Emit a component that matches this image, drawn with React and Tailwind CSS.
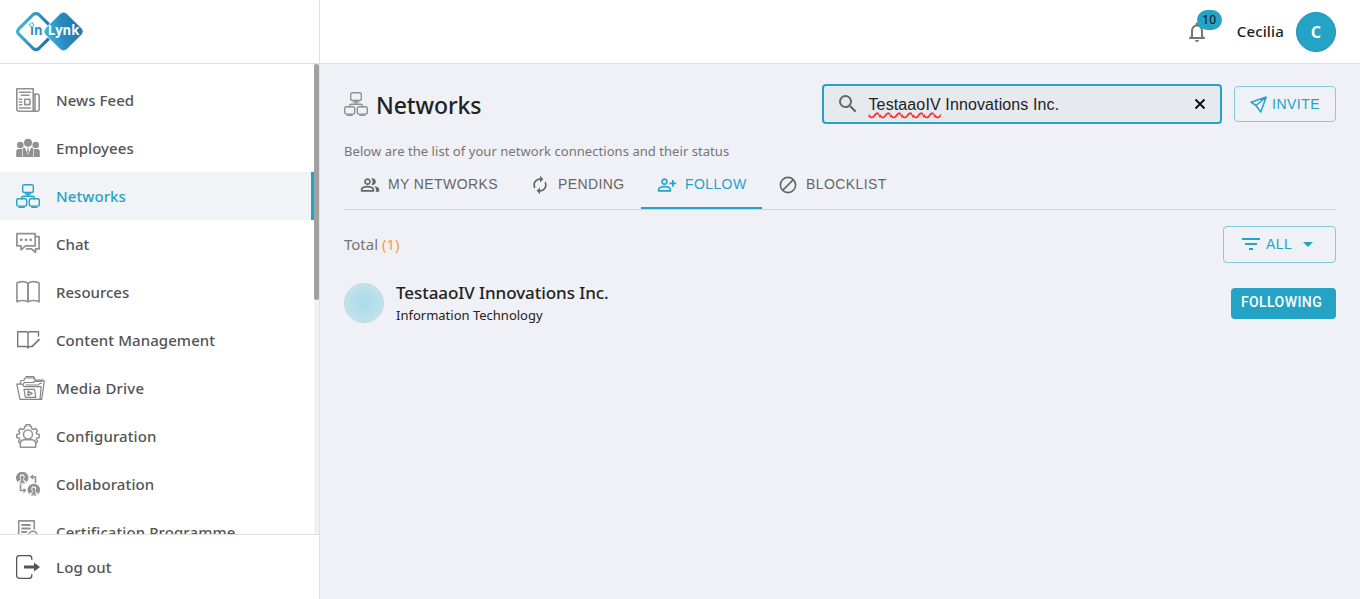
import React from "react";
import {
  MdOutlinePeopleAlt,
  MdAutorenew,
  MdOutlinePersonAddAlt,
  MdSearch,
  MdFilterList,
  MdArrowDropDown,
  MdNotificationsNone,
} from "react-icons/md";

function Icon({ children, className = "text-[#919191]", w = 24, h = 24, stroke = 1.4 }) {
  return (
    <svg
      className={"block shrink-0 " + className}
      width={w}
      height={h}
      viewBox={"0 0 " + w + " " + h}
      fill="none"
      stroke="currentColor"
      strokeWidth={stroke}
      strokeLinecap="round"
      strokeLinejoin="round"
    >
      {children}
    </svg>
  );
}

function NewsIcon() {
  return (
    <Icon stroke={1.6}>
      <path d="M3 0.8h14.2v22.4H3A2.2 2.2 0 0 1 .8 21V.8H3M17.2 6h3.8a2.2 2.2 0 0 1 2.2 2.2V21a2.2 2.2 0 0 1-2.2 2.2h-4a2.200 2.200 0 0 0 2-2.200V6" />
      <path d="M3.5 4.2h11M5.5 7.3h7.5M3.5 20h11M3.500 11.200h2.200M3.500 14h2.200M3.500 16.800h2.200" />
      <path d="M8.700 11.200h5.200v5.400H8.700z" />
    </Icon>
  );
}

function EmployeesIcon() {
  return (
    <Icon stroke={0}>
      <g fill="currentColor">
        <circle cx="12" cy="6.800" r="4" />
        <circle cx="4.300" cy="9" r="3.300" />
        <circle cx="19.700" cy="9" r="3.300" />
        <path d="M6.600 21v-7.200c0-1.400.8-2.300 2.200-2.300L12 19l3.200-7.500c1.400 0 2.200.9 2.200 2.300V21z" />
        <path d="M11.200 11.800h1.600l-.3 1.200.5 3-1 1.800-1-1.800.5-3z" />
        <path d="M.2 21v-5.400c0-1.400 1-2.500 2.300-2.500H6V21zM23.800 21v-5.400c0-1.400-1-2.500-2.300-2.500H18V21z" />
      </g>
    </Icon>
  );
}

function NetworkIcon({ className }) {
  return (
    <Icon className={className} stroke={1.4}>
      <rect x="6.700" y="0.700" width="10.600" height="7.800" rx="1.800" />
      <rect x="0.700" y="14.700" width="10" height="7.400" rx="1.800" />
      <rect x="13.300" y="14.700" width="10" height="7.400" rx="1.800" />
      <path d="M9.500 10h5M12 8.500v3.700M5.700 14.700v-1c0-.9.600-1.400 1.400-1.400h9.800c.8 0 1.400.5 1.400 1.400v1M3.200 23.300h5M15.800 23.300h5" />
    </Icon>
  );
}

function ChatIcon() {
  return (
    <Icon stroke={1.7}>
      <path d="M.9 1.700h18.300v12.200H9.500L5 17.800v-3.900H.9z" />
      <path d="M19.500 4.700h3.600v12.200h-3.600v3.400l-4-3.400h-4.800" />
      <g fill="currentColor" stroke="none">
        <circle cx="5.300" cy="7.800" r="1.400" />
        <circle cx="10" cy="7.800" r="1.400" />
        <circle cx="14.700" cy="7.800" r="1.400" />
      </g>
    </Icon>
  );
}

function BookIcon() {
  return (
    <Icon stroke={1.6}>
      <path d="M12 3.200C9 1.400 4.500 1.400.9 3v18.800c3.600-1.500 8.100-1.500 11.100 0 3-1.500 7.500-1.500 11.100 0V3C19.500 1.400 15 1.400 12 3.200zv18.600" />
      <path d="M12 3.200v18.400" strokeWidth="2" />
    </Icon>
  );
}

function ContentIcon() {
  return (
    <Icon className="text-[#777777]">
      <path d="M22.500 8V3.800h-9.200L12 5l-1.200-1.200H1.700v14.700h8.800L12 20l1.500-1.500h3M12 5v14.500" />
      <path d="M23 11.700l-6.500 6.500" strokeWidth="1.800" />
    </Icon>
  );
}

function MediaIcon() {
  return (
    <Icon w={29} stroke={1.2} className="text-[#848484]">
      <path d="M4 23.300L.8 8.200h5.500l1.800 2.500h17l-1 12q-.2.600-.8.600zM24.500 23.300h1.200L28.300 5.500c0-.8-.4-1.300-1.200-1.300H19l-1.500-2.200H9L7.800 4.500H5.200L4 7.800" />
      <path d="M7.500 8l.7-1.500h9l1.200-1.200h8M9.800.7h8l1.200 2M10 9h12.500l1.200-1.500h1.700" />
      <path d="M8 13.300h10.500l1.200 8H9.400z" />
      <path d="M12 15v4.400l4.300-1.900z" />
    </Icon>
  );
}

function ConfigIcon() {
  return (
    <Icon stroke={1.5}>
      <path d="M3.700 19.200l-1.200-1.800 1.300-2-.6-1.300-2.400-.5v-3l2.400-.6.6-1.400-1.300-2.100 2.100-2.200L6.700 5.600l1.500-.7L8.700 2.500l1.300-.2V.8h4v1.500l1.300.2.500 2.400 1.500.7 2.100-1.300 2.100 2.200-1.300 2.100.6 1.400 2.400.6v3l-2.400.5-.6 1.300 1.300 2-1.200 1.800" />
      <circle cx="12" cy="10.500" r="4.500" />
      <path d="M4.300 23.200v-3.500c0-2.500 1.800-4 4.500-4h6.400c2.700 0 4.500 1.500 4.500 4v3.500z" />
    </Icon>
  );
}

function Person({ x, y }) {
  return (
    <g transform={"translate(" + x + " " + y + ")"} stroke="none">
      <circle r="6.200" fill="currentColor" />
      <path d="M0-3.700c-1.900 0-2.600 1.400-2.400 3C-2.200.6-1.700 1.500-1.200 2c-2 .5-3 1-3.300 2.200L-4 5.500h8l.5-1.300C4.200 3 3.200 2.500 1.200 2c.5-.5 1-1.400 1.200-2.700.2-1.600-.5-3-2.400-3z" fill="#fff" />
      <path d="M0-2.500c-1.200 0-1.600 1-1.500 2C-1.400.7-.9 1.500-.7 2L-3 4.800h6L.7 2c.2-.5.700-1.300.8-2.500.1-1-.3-2-1.500-2z" fill="currentColor" />
    </g>
  );
}

function CollabIcon() {
  return (
    <Icon stroke={1.6}>
      <Person x={6.2} y={6} />
      <Person x={17.8} y={18} />
      <path d="M15 5h4.500v5.500M4.500 13v5.500H8" />
      <path d="M17.300 2.200v5.600L13.800 5zM7.500 15.700v5.600l3-2.800z" fill="currentColor" stroke="none" />
    </Icon>
  );
}

function CertIcon() {
  return (
    <Icon stroke={1.6}>
      <path d="M9 23H2.700V.9h15.600V9" />
      <path d="M6 5h8M6 8.500h8M6 12h4.500" strokeWidth="1.800" />
      <circle cx="17" cy="15.500" r="4.300" />
      <path d="M15.500 15.500l1.200 1.200 2-2.200" />
    </Icon>
  );
}

function LogoutIcon() {
  return (
    <Icon className="text-[#555555]" stroke={1.3}>
      <path d="M15.800 4.300V3.500c0-1.700-1.200-2.900-2.900-2.900H3.500C1.800.6.600 1.800.6 3.500v17c0 1.700 1.200 2.900 2.900 2.900h9.400c1.700 0 2.900-1.200 2.900-2.900v-.8" />
      <path d="M8 10.400h10V7.500l6 4.500-6 4.500v-2.900H8z" fill="currentColor" stroke="none" />
    </Icon>
  );
}

function Logo() {
  return (
    <svg className="block" width="68" height="40" viewBox="0 0 68 40">
      <defs>
        <linearGradient id="ring" x1="0" y1="0" x2="1" y2="0.300">
          <stop offset="0" stopColor="#45bfe0" />
          <stop offset="1" stopColor="#1d6fac" />
        </linearGradient>
        <linearGradient id="solid" x1="0" y1="0.500" x2="1" y2="0.300">
          <stop offset="0" stopColor="#3db8dc" />
          <stop offset="0.500" stopColor="#2788bd" />
          <stop offset="1" stopColor="#2b6fa8" />
        </linearGradient>
      </defs>
      <path d="M17.300 2.400q2.700-1.800 5.400 0L37 16.500q2.800 3 0 6L22.700 36.600q-2.700 1.800-5.400 0L3 22.500q-2.800-3 0-6z" fill="none" stroke="url(#ring)" strokeWidth="3.200" />
      <path d="M44.500 1.200q3-2.200 6 0L66 16.500q2.400 3 0 6L50.500 37.800q-3 2.200-6 0L29 22.500q-2.400-3 0-6z" fill="url(#solid)" stroke="#fff" strokeWidth="0.800" />
      <text x="14" y="23.300" fill="#2d8fc4" fontSize="14" fontWeight="700" fontFamily="Open Sans, sans-serif" textLength="12.500" lengthAdjust="spacingAndGlyphs">in</text>
      <text x="31.800" y="23.300" fill="#fff" fontSize="13.500" fontWeight="700" fontFamily="Open Sans, sans-serif" textLength="31.500" lengthAdjust="spacingAndGlyphs">Lynk</text>
      <circle cx="15.500" cy="12.800" r="1.900" fill="#fff" stroke="#3ba7cf" strokeWidth="1.200" strokeDasharray="1.200 0.500" />
    </svg>
  );
}

const items = [
  ["News Feed", NewsIcon, "tracking-[0.05px]"],
  ["Employees", EmployeesIcon, "tracking-[0.06px]"],
  ["Networks", NetworkIcon, "tracking-[0.08px]"],
  ["Chat", ChatIcon, ""],
  ["Resources", BookIcon, ""],
  ["Content Management", ContentIcon, "tracking-[0.08px]"],
  ["Media Drive", MediaIcon, "tracking-[0.2px]"],
  ["Configuration", ConfigIcon, "tracking-[0.1px]"],
  ["Collaboration", CollabIcon, "tracking-[0.12px]"],
  ["Certification Programme", CertIcon, "tracking-[0.1px]"],
];

function NavItem({ label, Glyph, tracking }) {
  const active = label === "Networks";
  return (
    <li
      className={
        "flex h-12 shrink-0 items-center pl-4 " +
        (active ? "border-r-[3px] border-[#24a3c6] bg-[#f1f3f7] text-[#24a3c6]" : "text-[#545454]")
      }
    >
      <div className="w-10 shrink-0 pb-px">
        <Glyph className={active ? "text-[#24a3c6]" : undefined} />
      </div>
      <span className={"whitespace-nowrap text-[15px] leading-6 font-medium " + tracking}>{label}</span>
    </li>
  );
}

function Sidebar() {
  return (
    <aside className="flex w-80 shrink-0 flex-col border-r border-[#e2e2e4] bg-white">
      <div className="flex h-16 shrink-0 items-start border-b border-[#e0e0e0] pt-3 pl-4">
        <Logo />
      </div>
      <div className="flex min-h-0 flex-1 overflow-hidden">
        <ul className="flex flex-1 flex-col overflow-hidden pt-3">
          {items.map(([label, Glyph, tracking]) => (
            <NavItem key={label} label={label} Glyph={Glyph} tracking={tracking} />
          ))}
        </ul>
        <div className="w-[5px] bg-[#f1f1f1]">
          <div className="h-[236px] rounded-full bg-[#a1a1a1]" />
        </div>
      </div>
      <div className="flex h-[65px] shrink-0 items-center border-t border-[#e0e0e0] pl-4 text-[#545454]">
        <div className="w-10">
          <LogoutIcon />
        </div>
        <span className="text-[15px] font-medium tracking-[0.15px]">Log out</span>
      </div>
    </aside>
  );
}

function Header() {
  return (
    <header className="flex h-16 shrink-0 items-center justify-end border-b border-[#e0e0e0] bg-white pr-6">
      <div className="relative mr-7 text-[#757575]">
        <MdNotificationsNone className="block size-6" />
        <span className="absolute -top-[10px] left-3 flex h-5 w-[25px] items-center justify-center rounded-full bg-[#24a3c6] text-xs text-[#111111]">
          10
        </span>
      </div>
      <span className="mr-3 text-[15px] font-medium tracking-[0.15px] text-[#1f1f1f]">Cecilia</span>
      <div className="flex size-10 items-center justify-center rounded-full border border-[#1f93b4] bg-[#24a3c6] text-base font-bold text-white">
        C
      </div>
    </header>
  );
}

function Tab({ icon, label, active, className }) {
  return (
    <div
      className={
        "flex h-[49px] items-start border-b-2 pt-[14px] font-['Liberation_Sans',sans-serif] text-sm leading-5 " +
        (active ? "border-[#24a3c6] text-[#24a3c6] " : "border-transparent text-[#666666] ") +
        className
      }
    >
      <span className="mr-2 flex h-[22px] w-5 items-center justify-center">{icon}</span>
      <span className="whitespace-nowrap tracking-[0.4px]">{label}</span>
    </div>
  );
}

export default function App() {
  return (
    <div className="flex h-[599px] w-[1360px] overflow-hidden bg-[#f0f1f6] font-['Noto_Sans',sans-serif]">
      <Sidebar />
      <div className="flex min-w-0 flex-1 flex-col">
        <Header />
        <main className="flex flex-col px-6 pt-5">
          <div className="flex h-10 items-center">
            <NetworkIcon className="text-[#919191]" />
            <h1 className="mt-[2px] ml-2 text-[23px] leading-8 font-medium tracking-[-0.1px] text-[#222222]">Networks</h1>
            <div className="ml-auto flex h-10 w-[400px] items-center rounded-[4px] border-2 border-[#24a3c6] bg-[#e6e9ee] pr-[14px] pl-3">
              <MdSearch className="size-6 text-[#666666]" />
              <span className="mt-px ml-[8.500px] font-['Liberation_Sans',sans-serif] text-base tracking-[0.120px] text-[#222222]">
                <span className="underline decoration-[#f33] decoration-wavy decoration-[1.500px] underline-offset-2">TestaaoIV</span> Innovations Inc.
              </span>
              <svg className="ml-auto block" width="12" height="12" viewBox="0 0 12 12" stroke="#111" strokeWidth="2">
                <path d="M1.500 1.500l9 9M10.500 1.500l-9 9" />
              </svg>
            </div>
            <div className="ml-3 flex h-9 w-[102px] items-center rounded-[4px] border border-[#82cadd] pl-[15px] font-['Liberation_Sans',sans-serif] text-[#24a3c6]">
              <svg className="mr-[5px] block" width="17" height="17" viewBox="0 0 17 17" fill="none" stroke="currentColor" strokeWidth="1.500" strokeLinejoin="round">
                <path d="M16.200 1L1 6.200l5 3.300zM16.200 1L6 9.500M16.200 1L10.800 16 6 9.500" />
              </svg>
              <span className="text-sm tracking-[0.500px]">INVITE</span>
            </div>
          </div>
          <p className="mt-4 text-[13px] leading-[22px] tracking-[0.050px] whitespace-nowrap text-[#757575]">
            Below are the list of your network connections and their status
          </p>
          <div className="-mt-1 flex h-[52px] items-start border-b border-[#d0d3da] pt-[2px]">
            <Tab className="w-[172px] pl-4" label="MY NETWORKS" icon={<MdOutlinePeopleAlt className="size-5 shrink-0" />} />
            <Tab className="w-[125px] pl-[14px]" label="PENDING" icon={<MdAutorenew className="size-5 shrink-0" />} />
            <Tab active className="w-[121px] pl-4" label="FOLLOW" icon={<MdOutlinePersonAddAlt className="size-5 shrink-0" />} />
            <Tab
              className="pl-4"
              label="BLOCKLIST"
              icon={
                <svg className="shrink-0" width="18" height="18" viewBox="0 0 18 18" fill="none" stroke="currentColor" strokeWidth="1.600">
                  <circle cx="9" cy="9" r="7.600" />
                  <path d="M3.600 14.400L14.400 3.600" />
                </svg>
              }
            />
          </div>
          <div className="mt-4 flex h-[37px] items-center justify-between">
            <p className="text-[15px] text-[#757575]">
              Total <span className="text-[#ff9a3c]">(1)</span>
            </p>
            <div className="flex h-[37px] w-[113px] items-center rounded-[4px] border border-[#82cadd] pb-[2px] pl-[15px] text-[#24a3c6]">
              <MdFilterList className="size-6" />
              <span className="ml-[3px] font-['Liberation_Sans',sans-serif] text-sm tracking-[0.400px]">ALL</span>
              <MdArrowDropDown className="ml-1 size-6" />
            </div>
          </div>
          <div className="mt-[18px] flex h-11 items-center">
            <div className="size-10 rounded-full border border-[#cfd4d9] bg-[radial-gradient(circle,#abdbe8_0%,#b5dfea_40%,#c9e6ef_100%)]" />
            <div className="ml-3">
              <p className="text-[17px] leading-6 font-medium tracking-[-0.060px] text-[#222222]">TestaaoIV Innovations Inc.</p>
              <p className="text-[13px] leading-5 text-[#222222]">Information Technology</p>
            </div>
            <button className="ml-auto flex h-[31px] w-[105px] items-center justify-center rounded-[4px] bg-[#24a3c6] pr-1 pb-[2px] font-['Roboto',sans-serif] text-sm font-medium tracking-[0.420px] text-white">
              FOLLOWING
            </button>
          </div>
        </main>
      </div>
    </div>
  );
}
